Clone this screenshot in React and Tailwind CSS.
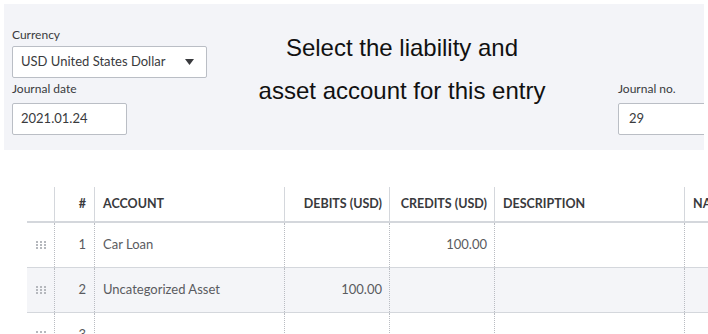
import React from "react";

function Grip() {
  return (
    <svg width="10" height="8" viewBox="0 0 10 8" className="block">
      {[0, 1, 2].map((r) =>
        [0, 1, 2].map((c) => (
          <rect key={`${r}${c}`} x={c * 4} y={r * 3} width="2" height="2" fill="#b5b8bd" />
        ))
      )}
    </svg>
  );
}

const rows = [
  { n: "1", account: "Car Loan", debit: "", credit: "100.00", bg: "bg-white" },
  { n: "2", account: "Uncategorized Asset", debit: "100.00", credit: "", bg: "bg-[#f4f5f8]" },
  { n: "3", account: "", debit: "", credit: "", bg: "bg-white" },
];

export default function App() {
  return (
    <div className="w-[708px] h-[334px] bg-white overflow-hidden font-['Lato','Noto_Sans',sans-serif] text-[#393a3d]">
      <div className="mx-[4px] mt-[4px] h-[146px] bg-[#f3f4f8] flex overflow-hidden">
        <div className="w-[202px] shrink-0 pl-[8px] pt-[23px]">
          <div className="text-[12px] leading-[16px] text-[#393a3d]">Currency</div>
          <div className="mt-[3px] h-[32px] w-[195px] bg-white border border-[#babec5] rounded-[2px] flex items-center pl-[8px] pr-[12px] justify-between">
            <span className="text-[13px] text-[#393a3d]">USD United States Dollar</span>
            <svg width="9" height="6" viewBox="0 0 9 6"><path d="M0 0h9L4.5 6z" fill="#393a3d" /></svg>
          </div>
          <div className="mt-[3px] text-[12px] leading-[16px]">Journal date</div>
          <div className="mt-[6px] h-[32px] w-[115px] bg-white border border-[#babec5] rounded-[2px] flex items-center pl-[8px]">
            <span className="text-[13px]">2021.01.24</span>
          </div>
        </div>
        <div className="w-[392px] shrink-0 pt-[22px] text-center text-[24px] leading-[43px] text-[#111] font-['Liberation_Sans',Arial,sans-serif]">
          <div>Select the liability and</div>
          <div>asset account for this entry</div>
        </div>
        <div className="pl-[20px] pt-[77px] shrink-0">
          <div className="text-[12px] leading-[16px]">Journal no.</div>
          <div className="mt-[6px] h-[32px] w-[120px] bg-white border border-[#babec5] rounded-[2px] flex items-center pl-[10px]">
            <span className="text-[13px]">29</span>
          </div>
        </div>
      </div>

      <div className="ml-[27px] mt-[37px] w-[800px]">
        <div className="flex h-[36px] border-b-2 border-[#d4d7dc] text-[12.5px] font-bold text-[#393a3d]">
          <div className="w-[28px] border-r border-[#d4d7dc]"></div>
          <div className="w-[40px] border-r border-[#d4d7dc] flex items-center justify-end pr-[8px]">#</div>
          <div className="w-[190px] border-r border-[#d4d7dc] flex items-center pl-[8px]">ACCOUNT</div>
          <div className="w-[105px] border-r border-[#d4d7dc] flex items-center justify-end pr-[7px]">DEBITS (USD)</div>
          <div className="w-[105px] border-r border-[#d4d7dc] flex items-center justify-end pr-[7px]">CREDITS (USD)</div>
          <div className="w-[190px] border-r border-[#d4d7dc] flex items-center pl-[8px]">DESCRIPTION</div>
          <div className="flex-1 flex items-center pl-[8px]">NAME</div>
        </div>
        {rows.map((r) => (
          <div key={r.n} className={`flex h-[45px] border-b border-[#d4d7dc] text-[13px] text-[#5a5b60] ${r.bg}`}>
            <div className="w-[28px] border-r border-dotted border-[#b9bcc2] flex items-center justify-center"><Grip /></div>
            <div className="w-[40px] border-r border-dotted border-[#b9bcc2] flex items-center justify-end pr-[8px]">{r.n}</div>
            <div className="w-[190px] border-r border-dotted border-[#b9bcc2] flex items-center pl-[8px]">{r.account}</div>
            <div className="w-[105px] border-r border-dotted border-[#b9bcc2] flex items-center justify-end pr-[7px]">{r.debit}</div>
            <div className="w-[105px] border-r border-dotted border-[#b9bcc2] flex items-center justify-end pr-[7px]">{r.credit}</div>
            <div className="w-[190px] border-r border-dotted border-[#b9bcc2]"></div>
            <div className="flex-1"></div>
          </div>
        ))}
      </div>
    </div>
  );
}
